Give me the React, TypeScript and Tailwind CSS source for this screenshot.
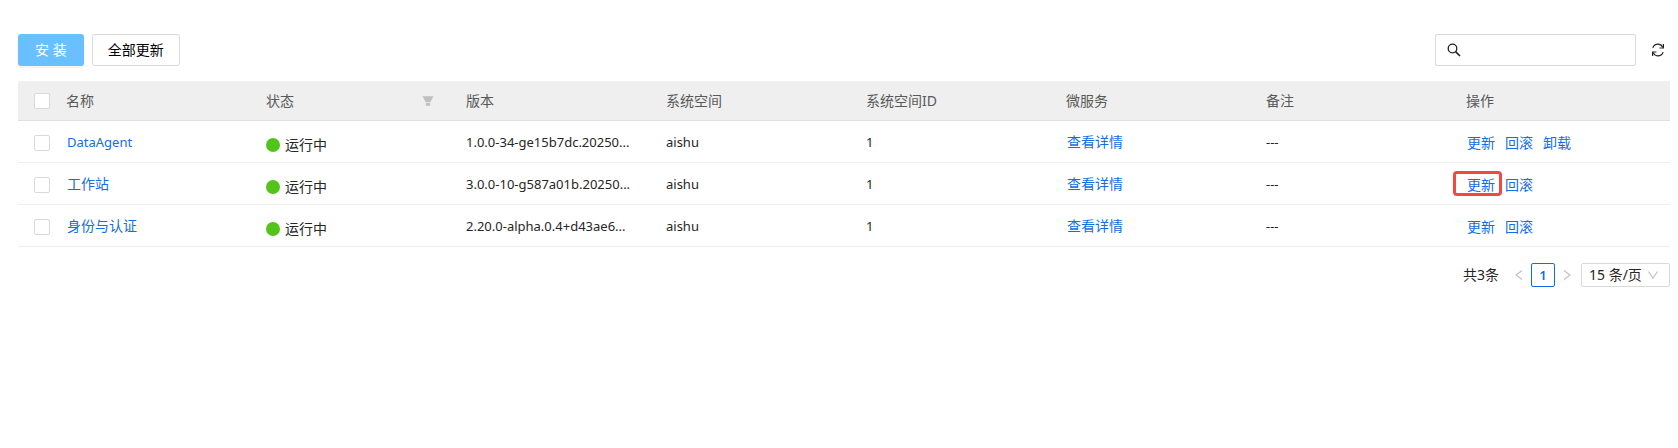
const columns = ["名称", "状态", "版本", "系统空间", "系统空间ID", "微服务", "备注", "操作"];

const rows = [
  {
    name: "DataAgent",
    version: "1.0.0-34-ge15b7dc.20250...",
    actions: ["更新", "回滚", "卸载"],
  },
  {
    name: "工作站",
    version: "3.0.0-10-g587a01b.20250...",
    actions: ["更新", "回滚"],
    highlight: "更新",
  },
  {
    name: "身份与认证",
    version: "2.20.0-alpha.0.4+d43ae6...",
    actions: ["更新", "回滚"],
  },
];

const linkClass = "border border-transparent text-sm text-[#126ee3] hover:underline";

function FilterIcon() {
  return (
    <svg viewBox="64 64 896 896" className="h-3 w-3 fill-[#bfbfbf]">
      <path d="M349 838c0 17.7 14.2 32 31.8 32h262.4c17.6 0 31.8-14.3 31.8-32V642H349v196zm531.1-684H143.9c-24.5 0-39.8 26.7-27.5 48l221.3 376h348.8l221.3-376c12.1-21.3-3.2-48-27.7-48z" />
    </svg>
  );
}

function SearchIcon() {
  return (
    <svg viewBox="0 0 14 14" className="h-3.5 w-3.5 shrink-0 fill-none stroke-[#222]">
      <circle cx="5.5" cy="5.5" r="4.3" strokeWidth="1.3" />
      <path d="M8.6 8.6L13 13" strokeWidth="1.6" />
    </svg>
  );
}

function RefreshIcon() {
  return (
    <svg viewBox="0 0 14 14" className="h-3.5 w-3.5 fill-none stroke-[#222]">
      <path d="M1.8 4.8C2.9 2.2 4.8 1.1 7 1.1c2 0 3.6 1 4.9 3.2" strokeWidth="1.2" />
      <path d="M12.4 1v4H8.6" strokeWidth="1.2" />
      <path d="M12.2 9.2c-1.1 2.6-3 3.7-5.2 3.7-2 0-3.6-1-4.9-3.2" strokeWidth="1.2" />
      <path d="M1.6 13V9h3.8" strokeWidth="1.2" />
    </svg>
  );
}

function Chevron({ points }: { points: string }) {
  return (
    <svg viewBox="0 0 12 12" className="h-3 w-3 fill-none stroke-[#bfbfbf]">
      <polyline points={points} strokeWidth="1.1" />
    </svg>
  );
}

function Checkbox({ label }: { label: string }) {
  return (
    <input
      type="checkbox"
      aria-label={label}
      className="block h-4 w-4 appearance-none rounded-xs border border-[#d9d9d9] bg-white checked:bg-[#126ee3]"
    />
  );
}

export default function App() {
  return (
    <main className="bg-white pt-[34px] pr-2 pl-[18px] font-['Noto_Sans','Noto_Sans_CJK_SC',sans-serif] text-[13px] text-[#262626]">
      <div className="flex items-center gap-2">
        <button className="h-8 rounded-[3px] bg-[#69c0ff] px-[17px] text-sm text-white shadow-[0_2px_0_rgba(0,0,0,0.045)]">
          安 装
        </button>
        <button className="h-8 rounded-[3px] border border-[#d9d9d9] bg-white px-[15px] text-sm text-black">
          全部更新
        </button>
        <label className="ml-auto flex h-8 w-[201px] items-center gap-2 rounded-xs border border-[#d9d9d9] px-[11px]">
          <SearchIcon />
          <input type="text" aria-label="搜索" className="w-full min-w-0 outline-none" />
        </label>
        <button aria-label="刷新" className="pr-[5px] pl-[7px]">
          <RefreshIcon />
        </button>
      </div>

      <table className="mt-[15px] w-full table-fixed border-separate border-spacing-0">
        <thead>
          <tr className="h-10 text-left text-sm text-[#595959]">
            <th className="w-12 rounded-tl-xs border-b border-[#e0e0e0] bg-[#efefef] pl-4">
              <Checkbox label="全选" />
            </th>
            {columns.map((col) => (
              <th
                key={col}
                className="w-[200px] border-b border-[#e0e0e0] bg-[#efefef] pr-4 font-normal last:w-auto"
              >
                <div className="flex items-center justify-between">
                  {col}
                  {col === "状态" && (
                    <button aria-label="筛选" className="pr-4">
                      <FilterIcon />
                    </button>
                  )}
                </div>
              </th>
            ))}
          </tr>
        </thead>
        <tbody>
          {rows.map((row) => (
            <tr key={row.name} className="h-[42px] [&>td]:border-b [&>td]:border-[#efefef] [&>td]:pt-0.5">
              <td className="pl-4">
                <Checkbox label={row.name} />
              </td>
              <td>
                <a
                  href="#"
                  className={row.name === "DataAgent" ? "border border-transparent text-[#126ee3]" : linkClass}
                >
                  {row.name}
                </a>
              </td>
              <td>
                <div className="flex items-center gap-[5px] pt-1 text-sm">
                  <span className="h-3.5 w-3.5 rounded-full bg-[#52c41a]" />
                  运行中
                </div>
              </td>
              <td className="whitespace-nowrap">{row.version}</td>
              <td>aishu</td>
              <td>1</td>
              <td>
                <a href="#" className={linkClass}>查看详情</a>
              </td>
              <td>---</td>
              <td>
                <div className="flex gap-2">
                  {row.actions.map((action) => (
                    <span key={action} className="relative">
                      <button className={linkClass}>{action}</button>
                      {row.highlight === action && (
                        <span className="pointer-events-none absolute -top-[3px] -right-1.5 bottom-0 -left-[13px] rounded-sm border-3 border-[#f04b3e]" />
                      )}
                    </span>
                  ))}
                </div>
              </td>
            </tr>
          ))}
        </tbody>
      </table>

      <nav aria-label="分页" className="mt-4 flex h-6 items-center justify-end text-sm">
        <span className="mr-2">共3条</span>
        <button aria-label="上一页" className="flex w-6 justify-center">
          <Chevron points="9,1.5 3,6 9,10.5" />
        </button>
        <button className="h-6 w-6 rounded-xs border border-[#126ee3] text-[13px] font-semibold text-[#126ee3]">
          1
        </button>
        <button aria-label="下一页" className="mr-0.5 flex w-6 justify-center">
          <Chevron points="3,1.5 9,6 3,10.5" />
        </button>
        <div className="relative">
          <select
            aria-label="每页条数"
            className="block h-6 w-[89px] appearance-none rounded-xs border border-[#d9d9d9] bg-white pl-[7px] text-sm"
          >
            <option>15 条/页</option>
          </select>
          <span className="pointer-events-none absolute top-1.5 right-[11px]">
            <Chevron points="1.5,2.5 6,9 10.5,2.5" />
          </span>
        </div>
      </nav>
    </main>
  );
}
